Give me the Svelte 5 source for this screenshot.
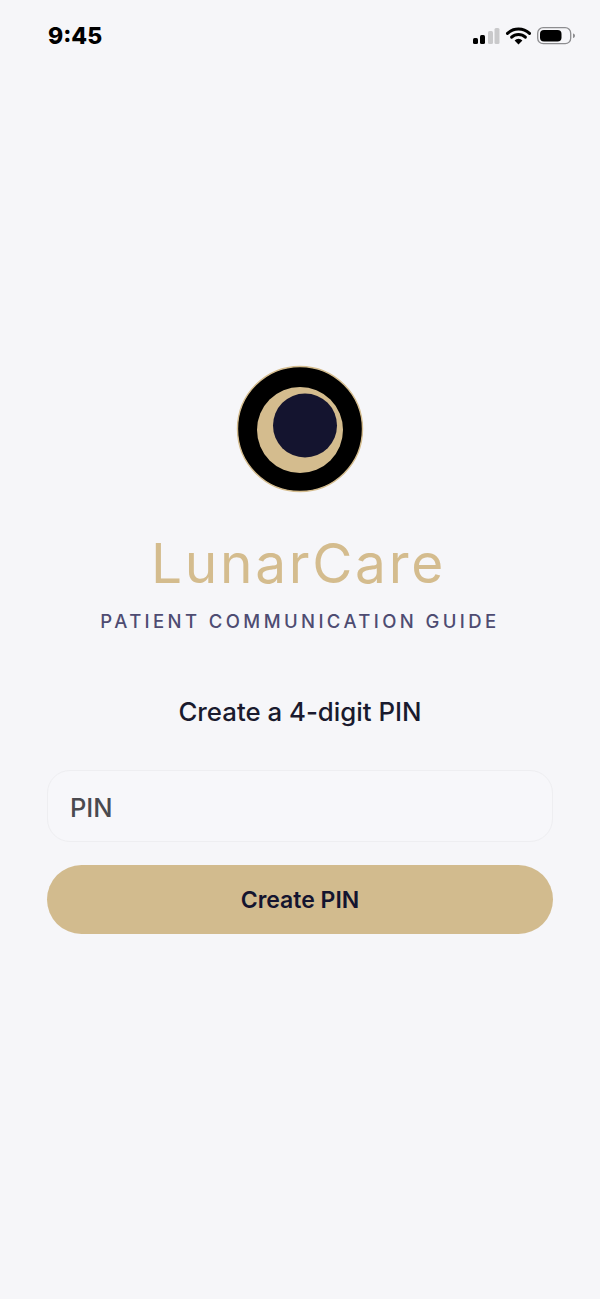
<script>
	let pin = '';
</script>

<div class="screen">
	<header class="status">
		<span class="time">9:45</span>
		<svg class="status-icons" width="103" height="18" viewBox="0 0 103 18">
			<rect x="0" y="11" width="5" height="6" rx="1.5" fill="#000" />
			<rect x="7" y="8" width="5" height="9" rx="1.5" fill="#000" />
			<rect x="15" y="4" width="5" height="13" rx="1.5" fill="#c9c9cb" />
			<rect x="21.5" y="1" width="5" height="16" rx="1.5" fill="#c9c9cb" />
			<path d="M34.5 6.4a16 16 0 0 1 22 0" fill="none" stroke="#000" stroke-width="3" stroke-linecap="round" />
			<path d="M38.6 10.2a10 10 0 0 1 13.8 0" fill="none" stroke="#000" stroke-width="3" stroke-linecap="round" />
			<path d="M45.5 17.4l-3.9-4a5.6 5.6 0 0 1 7.8 0z" fill="#000" />
			<rect x="64.7" y="0.7" width="33" height="16" rx="5.5" fill="none" stroke="#8d8d90" stroke-width="1.3" />
			<rect x="67" y="3" width="21.5" height="11.5" rx="4" fill="#000" />
			<path d="M100 6.5c1.2.3 2 1.2 2 2.3s-.8 2-2 2.3z" fill="#8d8d90" />
		</svg>
	</header>

	<main class="content">
		<svg class="logo" width="128" height="128" viewBox="0 0 128 128">
			<circle cx="64" cy="64" r="62.5" fill="#000" stroke="#d4bc8e" stroke-width="1.4" />
			<circle cx="64" cy="65" r="43" fill="#d4bc8e" />
			<circle cx="69" cy="60.5" r="32" fill="#14142f" />
		</svg>

		<h1>LunarCare</h1>
		<p class="tagline">PATIENT COMMUNICATION GUIDE</p>
		<h2>Create a 4-digit PIN</h2>

		<form class="pin-form" on:submit|preventDefault>
			<input type="password" placeholder="PIN" maxlength="4" bind:value={pin} />
			<button type="submit">Create PIN</button>
		</form>
	</main>
</div>

<style>
	:global(body) {
		margin: 0;
		background: #f6f6f9;
	}
	.screen {
		height: 1299px;
		overflow: hidden;
		background: #f6f6f9;
		font-family: Inter, "Liberation Sans", sans-serif;
	}
	.status {
		display: flex;
		justify-content: space-between;
		align-items: center;
		height: 18px;
		padding: 27px 24px 0 48px;
	}
	.time {
		font-size: 23px;
		font-weight: 800;
		color: #000;
	}
	.content {
		display: flex;
		flex-direction: column;
		align-items: center;
		padding: 320px 47px 0;
	}
	.logo {
		display: block;
	}
	h1 {
		margin: 37px 0 0;
		padding-right: 3px;
		font-size: 55px;
		line-height: 66px;
		font-weight: 400;
		letter-spacing: 2.7px;
		color: #d4bc8e;
	}
	.tagline {
		margin: 14px 0 0;
		font-size: 18.5px;
		line-height: 22px;
		font-weight: 550;
		letter-spacing: 3.4px;
		color: #4e4c72;
	}
	h2 {
		margin: 64px 0 0;
		font-size: 25.8px;
		line-height: 32px;
		font-weight: 500;
		color: #1a1a2e;
	}
	.pin-form {
		display: flex;
		flex-direction: column;
		gap: 23px;
		width: 506px;
		margin-top: 42px;
	}
	input {
		box-sizing: border-box;
		width: 100%;
		height: 72px;
		padding: 2px 22px 0;
		border: 1.5px solid #eeeef1;
		border-radius: 23px;
		background: #f7f7fa;
		font: 500 25.5px Inter, "Liberation Sans", sans-serif;
		color: #1a1a2e;
		outline: none;
	}
	input::placeholder {
		color: #4a4a4f;
		opacity: 1;
	}
	button {
		height: 69px;
		border: none;
		border-radius: 35px;
		background: #d2bb8e;
		font: 600 23px Inter, "Liberation Sans", sans-serif;
		color: #14142f;
		cursor: pointer;
	}
</style>
